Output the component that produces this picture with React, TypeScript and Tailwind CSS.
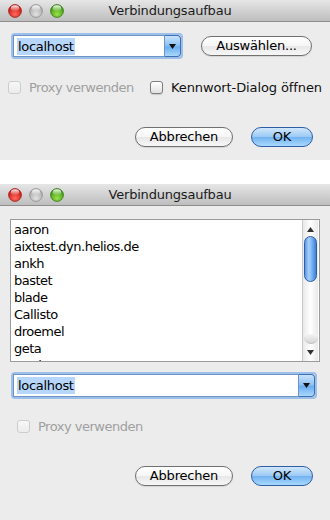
import React from "react";

const font = "font-['DejaVu_Sans',sans-serif] text-[12.5px] tracking-[-0.45px]";

const hosts = [
  "aaron",
  "aixtest.dyn.helios.de",
  "ankh",
  "bastet",
  "blade",
  "Callisto",
  "droemel",
  "geta",
  "matisse",
];

function Light({ id, c1, c2, edge }: { id: string; c1: string; c2: string; edge: string }) {
  return (
    <svg width="14" height="14" viewBox="0 0 14 14">
      <defs>
        <radialGradient id={id + "g"} cx="50%" cy="75%" r="65%">
          <stop offset="0" stopColor={c1} />
          <stop offset="1" stopColor={c2} />
        </radialGradient>
        <linearGradient id={id + "h"} x1="0" y1="0" x2="0" y2="1">
          <stop offset="0" stopColor="#fff" stopOpacity="0.95" />
          <stop offset="1" stopColor="#fff" stopOpacity="0" />
        </linearGradient>
      </defs>
      <circle cx="7" cy="7" r="6.4" fill={`url(#${id}g)`} stroke={edge} strokeWidth="0.8" />
      <ellipse cx="7" cy="4.3" rx="4.2" ry="3" fill={`url(#${id}h)`} />
    </svg>
  );
}

function TitleBar({ id }: { id: string }) {
  return (
    <div className="h-[22px] shrink-0 flex items-center bg-gradient-to-b from-[#e6e6e6] to-[#bebebe] border-b border-[#8e8e8e] relative">
      <div className="flex items-center gap-[7px] pl-[8px]">
        <Light id={id + "r"} c1="#ff6b5e" c2="#c8150f" edge="#9a1c16" />
        <Light id={id + "y"} c1="#e2e2e2" c2="#a9a9a9" edge="#8d8d8d" />
        <Light id={id + "v"} c1="#9be04c" c2="#3e9a12" edge="#2f7410" />
      </div>
      <div className="absolute inset-0 flex items-center justify-center text-[13px] tracking-[-0.2px] text-[#1b1b1b] pl-[10px]">
        Verbindungsaufbau
      </div>
    </div>
  );
}

function Checkbox({ label, disabled }: { label: string; disabled?: boolean }) {
  return (
    <div className="flex items-center gap-[8px]">
      <span
        className={
          disabled
            ? "w-[13px] h-[13px] rounded-[3px] border border-[#cdcdcd] bg-gradient-to-b from-[#f7f7f7] to-[#ececec]"
            : "w-[13px] h-[13px] rounded-[3px] border border-[#7e7e7e] bg-gradient-to-b from-white to-[#e2e2e2] shadow-[0_1px_1px_rgba(0,0,0,0.15)]"
        }
      />
      <span className={disabled ? "text-[13px] tracking-[-0.5px] text-[#a0a0a0]" : "text-[13px] tracking-[-0.1px] text-[#111]"}>
        {label}
      </span>
    </div>
  );
}

function Combo({ w, h }: { w: string; h: string }) {
  return (
    <div className={`${w} ${h} flex rounded-[2px] shadow-[0_0_0_2px_#9cc0ea]`}>
      <div className="flex-1 bg-white border border-[#6c94c6] flex items-center pl-[3px]">
        <span className="bg-[#b6d6fb] text-[13px] tracking-[-0.3px] leading-[17px] px-[1px] text-black">localhost</span>
      </div>
      <div className="w-[16px] rounded-r-[4px] border border-l-0 border-[#3e6fb1] bg-[linear-gradient(to_bottom,#c9e2fc_0%,#8fc3f4_45%,#6aaef0_55%,#a9d8fc_100%)] flex items-center justify-center">
        <svg width="7" height="5" viewBox="0 0 7 5">
          <path d="M0 0h7L3.5 5z" fill="#111" />
        </svg>
      </div>
    </div>
  );
}

function Button({ label, w, primary }: { label: string; w: string; primary?: boolean }) {
  return (
    <div
      className={
        primary
          ? `${w} h-[20px] rounded-full border border-[#2f5ea6] bg-[linear-gradient(to_bottom,#d2e7fc_0%,#9ccaf4_48%,#72b3f0_52%,#a9d9fd_100%)] flex items-center justify-center text-[13px] tracking-[-0.2px] text-black`
          : `${w} h-[20px] rounded-full border border-[#707070] bg-[linear-gradient(to_bottom,#ffffff_0%,#f6f6f6_48%,#e8e8e8_52%,#f7f7f7_100%)] flex items-center justify-center text-[13px] tracking-[-0.2px] text-black shadow-[0_1px_1px_rgba(0,0,0,0.1)]`
      }
    >
      {label}
    </div>
  );
}

export default function App() {
  return (
    <div className={`w-[330px] h-[520px] bg-white flex flex-col ${font}`}>
      {/* first window */}
      <div className="h-[160px] bg-[#ececec] flex flex-col">
        <TitleBar id="a" />
        <div className="flex items-center pl-[13px] pt-[13px]">
          <Combo w="w-[168px]" h="h-[22px]" />
          <div className="ml-[20px]">
            <Button label="Auswählen..." w="w-[111px]" />
          </div>
        </div>
        <div className="flex items-center pl-[8px] mt-[24px] h-[13px]">
          <div className="w-[142px]">
            <Checkbox label="Proxy verwenden" disabled />
          </div>
          <Checkbox label="Kennwort-Dialog öffnen" />
        </div>
        <div className="flex justify-end gap-[18px] pr-[17px] mt-[33px]">
          <Button label="Abbrechen" w="w-[98px]" />
          <Button label="OK" w="w-[62px]" primary />
        </div>
      </div>

      <div className="h-[24px] bg-white" />

      {/* second window */}
      <div className="flex-1 bg-[#ececec] flex flex-col">
        <TitleBar id="b" />
        <div className="ml-[10px] mt-[13px] w-[310px] h-[143px] border border-[#9b9b9b] bg-white flex overflow-hidden">
          <div className="flex-1 pl-[3px] pt-[1px]">
            {hosts.map((h) => (
              <div key={h} className="h-[17px] leading-[17px] text-[13px] tracking-[-0.5px] text-black">
                {h}
              </div>
            ))}
          </div>
          <div className="w-[16px] mr-[1px] border-l border-[#c9c9c9] bg-gradient-to-r from-[#e9e9e9] via-white to-[#e9e9e9] flex flex-col items-center">
            <svg className="mt-[7px]" width="7" height="5" viewBox="0 0 7 5">
              <path d="M3.5 0L7 5H0z" fill="#333" />
            </svg>
            <div className="mt-[4px] w-[13px] h-[46px] rounded-full border border-[#2c5fa8] bg-[linear-gradient(to_right,#5d98e2_0%,#a8d0fb_35%,#7db6f3_60%,#3f7fd6_100%)]" />
            <div className="flex-1" />
            <div className="w-[14px] h-[10px] rounded-b-full bg-gradient-to-b from-[#f4f4f4] to-[#d6d6d6] border-b border-[#c0c0c0]" />
            <svg className="mt-[6px] mb-[6px]" width="7" height="5" viewBox="0 0 7 5">
              <path d="M0 0h7L3.5 5z" fill="#333" />
            </svg>
          </div>
        </div>
        <div className="ml-[13px] mt-[12px]">
          <Combo w="w-[302px]" h="h-[23px]" />
        </div>
        <div className="pl-[17px] mt-[23px] h-[13px] flex items-center">
          <Checkbox label="Proxy verwenden" disabled />
        </div>
        <div className="flex justify-end gap-[18px] pr-[17px] mt-[33px]">
          <Button label="Abbrechen" w="w-[98px]" />
          <Button label="OK" w="w-[62px]" primary />
        </div>
      </div>
    </div>
  );
}
